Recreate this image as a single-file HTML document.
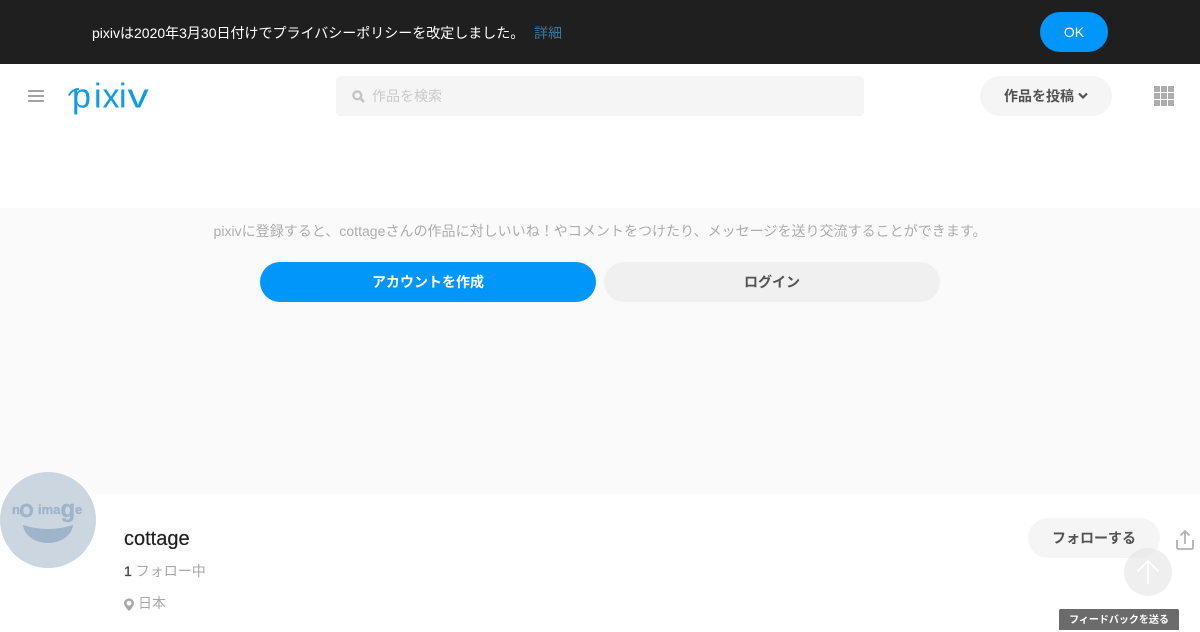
<!DOCTYPE html>
<html lang="ja"><head><meta charset="utf-8"><title>cottage - pixiv</title>
<style>
html,body{margin:0;padding:0}
body{width:1200px;height:630px;overflow:hidden;position:relative;background:#fff;font-family:"Liberation Sans","Noto Sans CJK JP",sans-serif;font-size:14px}
.a{position:absolute;white-space:nowrap}
.btn{position:absolute;border-radius:20px;height:40px;line-height:40px;text-align:center;font-weight:bold;font-size:14px}
</style></head><body>
<div class="a" style="left:0;top:0;width:1200px;height:64px;background:#1f1f1f"></div>
<div class="a" style="left:92px;top:23px;line-height:20px;color:#fff">pixivは2020年3月30日付けでプライバシーポリシーを改定しました。</div>
<div class="a" style="left:534px;top:23px;line-height:20px;color:#3d7699">詳細</div>
<div class="btn" style="left:1040px;top:12px;width:68px;background:#0096fa;color:#fff;font-weight:normal">OK</div>

<svg class="a" style="left:28px;top:89px" width="16" height="14"><path d="M0 2h16M0 7h16M0 12h16" stroke="#a3a3a3" stroke-width="2"/></svg>
<svg class="a" style="left:66px;top:76px" width="88" height="40" viewBox="0 0 88 40">
<path d="M3 19.500C5 15 9 13 13 13" fill="none" stroke="#0f9aee" stroke-width="2"/>
<g font-family="Liberation Sans" font-size="34" fill="#0f9aee">
<text x="6" y="31.500">p</text>
<text x="28" y="31.500">i</text>
<text x="36.500" y="31.500">x</text>
<text x="53" y="31.500">i</text>
<text transform="translate(61.500 31.500) scale(1.250 1)" x="0" y="0">v</text>
</g></svg>

<div class="a" style="left:336px;top:76px;width:528px;height:40px;background:#f5f5f5;border-radius:4px"></div>
<svg class="a" style="left:352px;top:90px" width="13" height="13" viewBox="0 0 13 13"><circle cx="5.300" cy="5.300" r="3.900" fill="none" stroke="#c4c4c4" stroke-width="2.400"/><path d="M8.200 8.200L12 12" stroke="#c4c4c4" stroke-width="2.600"/></svg>
<div class="a" style="left:372px;top:86px;line-height:21px;color:#c9c9c9">作品を検索</div>

<div class="a" style="left:980px;top:76px;width:132px;height:40px;background:#f5f5f5;border-radius:20px"></div>
<div class="a" style="left:1004px;top:86px;line-height:20px;font-weight:bold;color:#525252">作品を投稿</div>
<svg class="a" style="left:1078px;top:92px" width="10" height="8"><path d="M1 1.500L5 5.500L9 1.500" fill="none" stroke="#525252" stroke-width="2.200"/></svg>
<svg class="a" style="left:1154px;top:86px" width="20" height="20" fill="#adadad"><rect width="6" height="6"/><rect x="7" width="6" height="6"/><rect x="14" width="6" height="6"/><rect y="7" width="6" height="6"/><rect x="7" y="7" width="6" height="6"/><rect x="14" y="7" width="6" height="6"/><rect y="14" width="6" height="6"/><rect x="7" y="14" width="6" height="6"/><rect x="14" y="14" width="6" height="6"/></svg>

<div class="a" style="left:0;top:208px;width:1200px;height:286px;background:#fafafa"></div>
<div class="a" style="left:0;top:221px;width:1200px;text-align:center;line-height:21px;color:#adadad;letter-spacing:.03px">pixivに登録すると、cottageさんの作品に対しいいね！やコメントをつけたり、メッセージを送り交流することができます。</div>
<div class="btn" style="left:260px;top:262px;width:336px;background:#0096fa;color:#fff">アカウントを作成</div>
<div class="btn" style="left:604px;top:262px;width:336px;background:#f0f0f0;color:#525252">ログイン</div>

<svg class="a" style="left:0;top:472px" width="96" height="96" viewBox="0 0 96 96">
<circle cx="48" cy="48" r="48" fill="#cbd6e0"/>
<path d="M23 53Q48 61 73 53C72 64 60 71 48 71C36 71 24 64 23 53Z" fill="#9fb3c9"/>
<g font-family="Liberation Sans" font-weight="bold" fill="#9fb3c9" stroke="#9fb3c9" font-size="13" stroke-width=".3">
<text x="12" y="42">n</text>
<text x="19.500" y="45" font-size="18" stroke-width=".7">O</text>
<text x="38" y="42">ima</text>
<text x="60.500" y="45" font-size="24" stroke-width=".4">g</text>
<text x="75" y="42">e</text>
</g>
</svg>

<div class="a" style="left:124px;top:527px;line-height:24px;font-size:20px;color:#1f1f1f;-webkit-text-stroke:.2px #1f1f1f">cottage</div>
<div class="a" style="left:124px;top:561px;line-height:20px;color:#a8a8a8"><span style="color:#474747;-webkit-text-stroke:.3px #474747;margin-right:4px">1</span>フォロー中</div>
<svg class="a" style="left:124px;top:598px" width="10" height="13" viewBox="0 0 10 13"><path d="M5 0.500C2.200 0.500 0 2.600 0 5.200C0 8.400 5 13 5 13C5 13 10 8.400 10 5.200C10 2.600 7.800 0.500 5 0.500Z" fill="#a8a8a8"/><circle cx="5" cy="5.200" r="2.400" fill="#fff"/></svg>
<div class="a" style="left:138px;top:593px;line-height:20px;color:#a8a8a8">日本</div>

<div class="btn" style="left:1028px;top:518px;width:132px;background:#f5f5f5;color:#525252">フォローする</div>
<svg class="a" style="left:1175px;top:529px" width="20" height="22" viewBox="0 0 20 22"><path d="M10 15V2M5.500 6.500L10 2L14.500 6.500M2 11V18.500Q2 20 3.500 20H16.500Q18 20 18 18.500V11" fill="none" stroke="#b3b3b3" stroke-width="1.800"/></svg>
<div class="a" style="left:1124px;top:548px;width:48px;height:48px;border-radius:50%;background:rgba(225,225,225,.55)"></div>
<svg class="a" style="left:1136px;top:559px" width="24" height="26" viewBox="0 0 24 26"><path d="M12 25V2M1.500 12.500L12 2L22.500 12.500" fill="none" stroke="#fff" stroke-width="1.600"/></svg>
<div class="a" style="left:1059px;top:609px;width:120px;height:21px;background:#6b6b6b;border-radius:2px 2px 0 0;color:#fff;font-size:10px;font-weight:bold;line-height:23px;text-align:center">フィードバックを送る</div>
</body></html>
